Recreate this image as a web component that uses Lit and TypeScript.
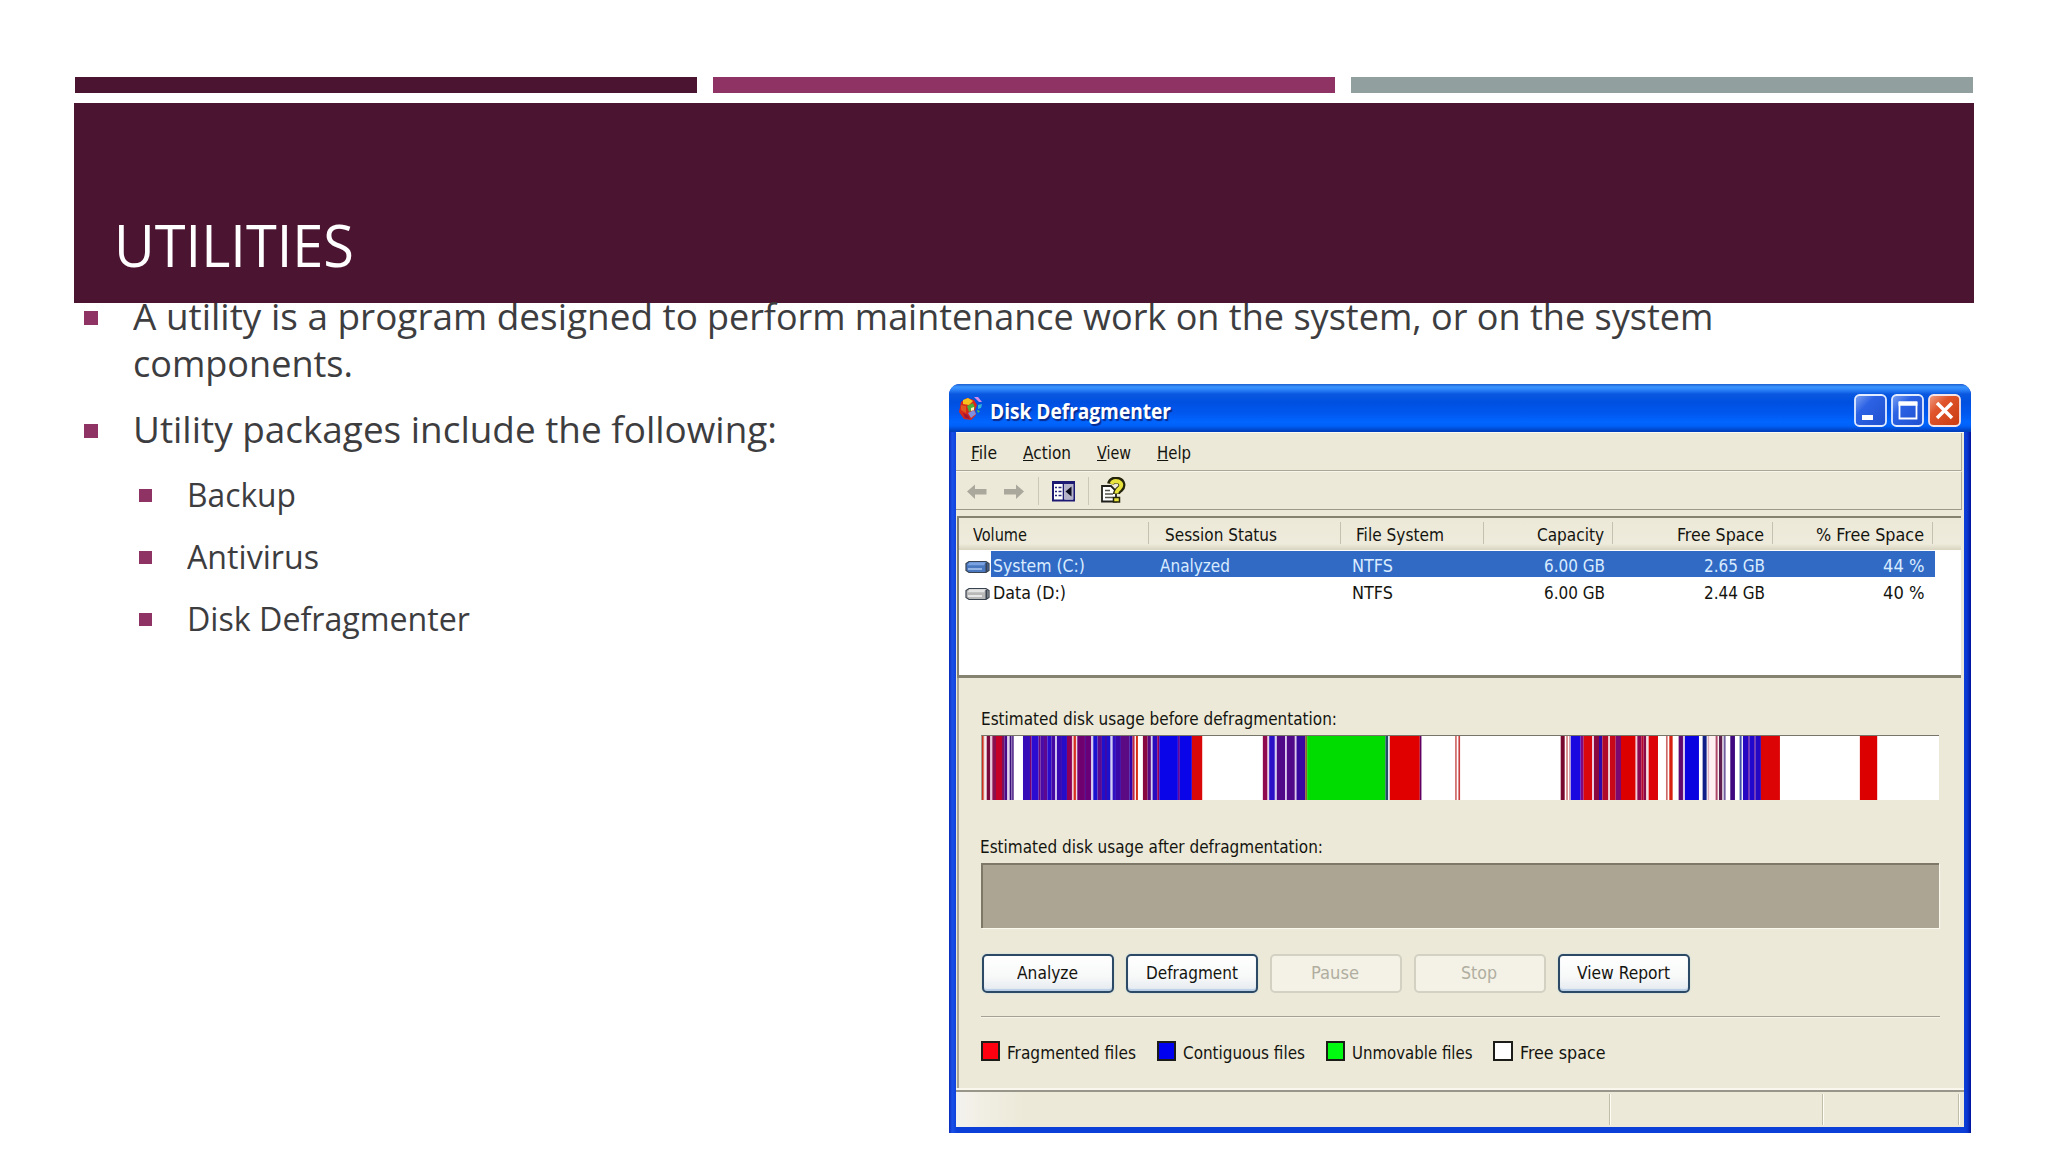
import { LitElement, html, css, svg } from "lit";
import { customElement, property } from "lit/decorators.js";

/** One line of text set to an exact width, whatever the font's own metrics. */
@customElement("fit-text")
class FitText extends LitElement {
  static styles = css`
    :host { display: block; flex: none; }
    .box { display: block; white-space: nowrap; }
    .ink { display: inline-block; transform-origin: 0 50%; white-space: pre; }
  `;
  @property({ type: Number }) w = 100;
  @property() text = "";
  @property() key = "";

  updated() {
    const ink = this.renderRoot.querySelector<HTMLElement>(".ink")!;
    ink.style.transform = "none";
    const natural = ink.getBoundingClientRect().width;
    if (natural > 0) ink.style.transform = `scaleX(${this.w / natural})`;
  }

  render() {
    const i = this.key ? this.text.indexOf(this.key) : -1;
    const body = i < 0 ? this.text : html`${this.text.slice(0, i)}<u>${this.key}</u>${this.text.slice(i + 1)}`;
    return html`<span class="box" style="width:${this.w}px"><span class="ink">${body}</span></span>`;
  }
}

type Stripe = [number, number, string];

// Each group is measured in thirds of a pixel from its own origin.
const GROUPS: { origin: number; stripes: Stripe[] }[] = [
  {
    origin: 970,
    stripes: [
      [36, 41, "#c8321e"], [43, 46, "#eec8c8"], [50, 61, "#7a0a3c"], [61, 67, "#e8c8dc"], [67, 78, "#8a1050"],
      [78, 96, "#c40028"], [96, 103, "#7a1060"], [103, 112, "#4b0a8a"], [112, 119, "#e0d0ee"], [119, 131, "#3c107c"],
      [124, 127, "#b8a0d0"],
      [159, 180, "#360cb8"], [180, 185, "#7a0070"], [185, 206, "#2b0cd0"], [206, 212, "#6a0880"],
      [212, 222, "#4a0aa8"], [222, 232, "#5c0890"], [232, 244, "#2a0ccc"], [244, 256, "#4408a4"],
      [256, 261, "#d0c4f0"], [261, 276, "#3808b0"], [276, 291, "#260cc8"], [291, 306, "#8c0058"],
      [306, 311, "#f0d0d8"], [311, 318, "#d83020"], [318, 322, "#f0d8e0"], [322, 345, "#700070"],
      [345, 348, "#4a0890"], [348, 364, "#6a0078"], [364, 370, "#d8c8f0"], [370, 383, "#1a10d0"],
      [383, 396, "#5a0a90"], [396, 422, "#1f10cc"], [406, 410, "#4808a0"], [422, 428, "#d0ccf4"],
      [428, 438, "#3010c0"], [438, 453, "#3808a8"], [453, 478, "#5c0a84"], [478, 488, "#3408a8"],
      [488, 494, "#c02848"], [498, 504, "#d82c14"], [519, 533, "#8a0840"], [533, 543, "#5a0a80"],
      [543, 548, "#d8d0f0"], [548, 562, "#2a0cc0"], [562, 568, "#900060"], [568, 624, "#0a04e8"],
      [624, 630, "#6008a0"], [630, 666, "#0a04e8"], [666, 697, "#d80808"], [879, 893, "#900a50"],
      [893, 898, "#e8d0ec"], [898, 915, "#2a10c8"], [915, 921, "#d4ccf0"], [921, 946, "#500888"],
      [946, 951, "#dcc8ec"], [951, 975, "#500888"], [975, 980, "#dcc8ec"], [980, 1006, "#3808a0"],
      [1006, 1012, "#8c6430"],
    ],
  },
  {
    origin: 1250,
    stripes: [
      [172, 407, "#00dc00"], [407, 415, "#204c68"], [415, 420, "#d8e8f0"], [420, 510, "#e00000"],
      [510, 515, "#600060"], [616, 621, "#d06868"], [626, 631, "#c84040"],
    ],
  },
  {
    origin: 1540,
    stripes: [
      [63, 75, "#780830"], [80, 84, "#c86060"], [88, 92, "#d8a0a8"], [93, 123, "#1a08e0"], [123, 132, "#800880"],
      [132, 157, "#d8080c"], [157, 163, "#eccce0"], [163, 178, "#8a0840"], [178, 188, "#3008a8"],
      [188, 206, "#b00828"], [206, 211, "#f0ccd4"], [211, 228, "#c80818"], [228, 244, "#7a0870"],
      [244, 288, "#dc0000"], [288, 293, "#f0ccd8"], [293, 305, "#8c0850"], [305, 312, "#b80830"],
      [312, 320, "#8c0848"], [320, 327, "#f4dce0"], [327, 355, "#dc0408"], [379, 384, "#cc6868"],
      [389, 399, "#d82010"], [417, 430, "#600870"], [430, 436, "#d8c8ec"], [436, 478, "#0c04e0"],
      [489, 501, "#102088"], [504, 509, "#dcb0bc"], [510, 528, "#fff0f2"], [528, 534, "#b04868"],
      [538, 548, "#602050"], [552, 558, "#7060a0"], [572, 586, "#400880"], [600, 606, "#4050a8"],
      [610, 626, "#2408c4"], [626, 630, "#5c08a0"], [630, 644, "#2008cc"], [644, 648, "#5808a0"],
      [648, 664, "#2408c4"], [664, 721, "#dc0404"], [961, 1013, "#dc0000"],
    ],
  },
];

const drive = (face: string, lid: string, light: string) => html`
  <svg class="drive" width="25" height="14" viewBox="0 0 25 14">
    <path d="M4 1.5h17l3 2v7l-3 2H4l-3-2v-7z" fill=${face} stroke="#39424f" stroke-width="1.2" />
    <path d="M4.5 2.2h16l-1.5 3H2.5z" fill=${lid} />
    <path d="M3 9h14" stroke=${light} stroke-width="1.6" />
    <path d="M21.5 3v9" stroke="#39424f" stroke-width="2" />
  </svg>`;

@customElement("defrag-window")
class DefragWindow extends LitElement {
  static styles = css`
    * { box-sizing: border-box; }
    :host {
      display: flex; flex-direction: column; width: 1022px; height: 749px;
      font: 17.5px/20px "DejaVu Sans Condensed", "DejaVu Sans", sans-serif; color: #14140f;
      background: linear-gradient(90deg, #0a2ab8 0, #1a50e8 3px, #0c3fd8 8px, #0c3fd8 1015px, #0a38d0 1018px, #00149c 1022px);
      border-radius: 11px 11px 0 0; overflow: hidden;
    }
    .title {
      height: 48px; flex: none; display: flex; align-items: flex-start; padding: 10px 10px 0 8px;
      background: linear-gradient(180deg, #1c5fd0 0, #3b96ff 3px, #2a80f8 6px, #0a58e0 10px, #0050e0 18px, #0058f0 30px, #0066ff 38px, #0060f8 42px, #0040c0 47px, #0040b8 48px);
    }
    .appicon { margin: 2px 7px 0 1px; }
    .name { font: bold 21px/24px "Open Sans", sans-serif; color: #fff; text-shadow: 1.5px 1.5px 1px #0a2a8c; margin-top: 5px; }
    .ctl { margin-left: auto; display: flex; gap: 4px; }
    .body { flex: 1; margin: 0 7px 6px 7px; background: #ece9d8; display: flex; flex-direction: column; border-top: 1px solid #fbfaf2; }
    .menu { height: 38px; flex: none; display: flex; padding: 10px 0 0 14.5px; border-bottom: 1px solid #aaa797; margin-right: 2px; border-right: 1px solid #aaa797; }
    .menu fit-text:nth-child(2) { margin-left: 26px; }
    .menu fit-text:nth-child(3) { margin-left: 26px; }
    .menu fit-text:nth-child(4) { margin-left: 26px; }
    .tools { height: 39px; flex: none; display: flex; align-items: flex-start; padding: 5px 0 0 9px; border-top: 1px solid #f8f6ea; border-bottom: 1.5px solid #9c998a; margin-right: 2px; border-right: 1px solid #aaa797; }
    .help { margin-left: 4px; }
    .table { height: 162px; flex: none; margin: 6px 3px 0 1px; border: solid #85826f; border-width: 2.5px 0 3px 2px; background: #fff; }
    .row { display: grid; grid-template-columns: 190px 192px 143px 129px 160px 160px 28px; align-items: start; }
    .cell { display: flex; height: 100%; }
    .cell.r { justify-content: flex-end; padding-right: 8.5px; }
    .head { height: 32px; background: linear-gradient(180deg, #ece9d8 0, #eeebdc 26px, #d8d4c0 32px); }
    .head .cell { height: 22px; margin-top: 4px; padding-top: 3px; border-right: 1px solid #c4c1b0; }
    .head .cell:last-child { border: 0; }
    .line { height: 27px; padding-top: 4.5px; }
    .c0 { padding-left: 13.5px; } .c1 { padding-left: 15.5px; } .c2 { padding-left: 15px; }
    .line .c0 { padding-left: 6px; } .line .c1 { padding-left: 10.5px; } .line .c2 { padding-left: 10.5px; }
    .drive { margin: 4px 2.5px 0 0; flex: none; }
    .sel { margin-top: 1px; color: #d9ecff; background: linear-gradient(#316ac5, #316ac5) 32px 0 / 944px 26px no-repeat; }
    .panel { flex: 1; display: flex; flex-direction: column; align-items: flex-start; margin-left: 1px; border-left: 2px solid #a9a593; padding-left: 21.5px; }
    .before { margin-top: 31px; }
    .usage { display: block; width: 958.5px; height: 65.5px; margin-top: 5.7px; background: #fff; border-top: 1.5px solid #77756a; border-left: 1px solid #a09d90; }
    .usage svg { display: block; width: 100%; height: 100%; }
    .after { margin: 36.7px 0 0 -1px; }
    .empty { width: 958px; height: 65.5px; margin-top: 6px; background: #aca593; border: solid #7d7868; border-width: 2px 0 0 2px; box-shadow: 1px 1px 0 #fbf9ee; }
    .buttons { display: flex; gap: 12px; margin: 25.5px 0 0 1px; }
    .btn { width: 132px; height: 39px; border-radius: 5px; border: 2px solid #2c4a66; display: flex; justify-content: center; padding-top: 7px;
      background: linear-gradient(180deg, #fff 0, #f7f8f8 60%, #e4eaf0 100%); box-shadow: inset 0 -2px 1px #b9cfe6, 0 0 2px #b8d4e0; }
    .btn.off { border-color: #d3d1c2; background: #f4f2e6; color: #b0aea0; box-shadow: none; padding-right: 2px; }
    .rule { width: 959px; height: 2px; margin-top: 23px; border-top: 1px solid #a5a293; border-bottom: 1px solid #f6f4e8; }
    .legend { display: flex; align-items: flex-start; margin-top: 23.5px; }
    .sw { width: 19.5px; height: 19.5px; border: 2px solid #1c1c18; margin-right: 7px; flex: none; }
    .legend fit-text { margin: 2px 20.5px 0 0; }
    .red { background: #ff0010; } .blue { background: #0000f0; } .green { background: #00fa10; } .white { background: #fff; }
    .status { height: 37px; flex: none; display: flex; border-top: 2px solid #98958a; padding-top: 2px; box-shadow: 0 -2px 0 #faf8ee;
      background: linear-gradient(90deg, #f4f2ee 0, #f0eee2 30px, #ece9d8 70px); }
    .status i { border-right: 1px solid #c0bda8; box-shadow: 1px 0 0 #fffdf4; height: 31px; }
    .s1 { width: 654px; } .s2 { width: 213px; } .s3 { width: 136px; }
  `;

  private stripes() {
    return GROUPS.flatMap(({ origin, stripes }) =>
      stripes.map(([a, b, color]) => svg`<rect x=${origin - 982 + a / 3} y="0" width=${(b - a) / 3} height="65" fill=${color} />`),
    );
  }

  render() {
    return html`
      <div class="title">
        <svg class="appicon" width="25" height="26" viewBox="0 0 25 26">
          <path d="M3 6l6-4 7 2 3 5-2 5 1 5-5 5-7-1-5-7z" fill="#d8281c" />
          <path d="M5 4l5-2 5 3-4 4-6-1z" fill="#f7c21c" />
          <path d="M3 9l5 1v7l-5-3z" fill="#e05a20" />
          <path d="M9 10l6-3 2 5-6 4z" fill="#4fae38" />
          <path d="M10 17l6-3 2 4-5 4z" fill="#7e8fe0" />
          <path d="M5 17l5 2 2 4-5-1z" fill="#a01838" />
          <path d="M13 12l3-1v3l-3 1z" fill="#fff3b0" />
          <path d="M16 1l4 0 4 5-3 0z" fill="#d88ae8" />
          <path d="M20 9l4-1-1 4-3 1z" fill="#35b8d8" />
          <path d="M19 14l3 1-2 2z" fill="#58c850" />
        </svg>
        <fit-text class="name" .w=${181} text="Disk Defragmenter"></fit-text>
        <div class="ctl">
          <svg width="33" height="33" viewBox="0 0 33 33">
            <defs>
              <linearGradient id="b" x1="0" y1="0" x2="1" y2="1"><stop offset="0" stop-color="#7fa4f4" /><stop offset=".35" stop-color="#2c62e4" /><stop offset="1" stop-color="#1e50d0" /></linearGradient>
            </defs>
            <rect x="1" y="1" width="31" height="31" rx="4.5" fill="url(#b)" stroke="#e4ecff" stroke-width="1.8" />
            <rect x="8" y="21" width="11" height="5" fill="#fff" />
          </svg>
          <svg width="33" height="33" viewBox="0 0 33 33">
            <defs>
              <linearGradient id="b2" x1="0" y1="0" x2="1" y2="1"><stop offset="0" stop-color="#7fa4f4" /><stop offset=".35" stop-color="#2c62e4" /><stop offset="1" stop-color="#1e50d0" /></linearGradient>
            </defs>
            <rect x="1" y="1" width="31" height="31" rx="4.5" fill="url(#b2)" stroke="#e4ecff" stroke-width="1.8" />
            <path d="M8.5 9h17v15.500h-17z" fill="none" stroke="#fff" stroke-width="1.8" />
            <path d="M7.600 9.500h18.800" stroke="#fff" stroke-width="4.500" />
          </svg>
          <svg width="33" height="33" viewBox="0 0 33 33">
            <defs>
              <linearGradient id="r" x1="0" y1="0" x2="1" y2="1"><stop offset="0" stop-color="#f0a088" /><stop offset=".35" stop-color="#e0552c" /><stop offset="1" stop-color="#c83a10" /></linearGradient>
            </defs>
            <rect x="1" y="1" width="31" height="31" rx="4.5" fill="url(#r)" stroke="#f4e4e8" stroke-width="1.8" />
            <path d="M9 9l15 15M24 9L9 24" stroke="#fff" stroke-width="3.4" />
          </svg>
        </div>
      </div>
      <div class="body">
        <div class="menu">
          <fit-text .w=${26} text="File" key="F"></fit-text>
          <fit-text .w=${48} text="Action" key="A"></fit-text>
          <fit-text .w=${34} text="View" key="V"></fit-text>
          <fit-text .w=${34} text="Help" key="H"></fit-text>
        </div>
        <div class="tools">
          <svg width="130" height="28" viewBox="965 477 130 28">
            <path d="M967 491.500l8-7v4.500h11.500v5.500h-11.500v4.500z" fill="#aaa89c" />
            <path d="M1024 491.500l-8-7v4.500h-12v5.500h12v4.500z" fill="#aaa89c" />
            <path d="M1038.500 475v30M1088.500 475v30" stroke="#cbc8b8" />
            <rect x="1053" y="482" width="21" height="18.500" fill="#fff" stroke="#1c1a72" stroke-width="2" />
            <path d="M1052 482.500h23" stroke="#1c1a72" stroke-width="3" />
            <path d="M1063.500 484v16" stroke="#1c1a72" stroke-width="1.600" />
            <rect x="1064.500" y="484" width="9" height="15.500" fill="#b4b2c8" />
            <path d="M1071.500 486.500v10l-6-5z" fill="#0c0c20" />
            <path d="M1055 487.500h2M1055 491.500h2M1055 495.500h2M1058.500 487.500h3M1058.500 491.500h3M1058.500 495.500h3" stroke="#2a287c" stroke-width="1.600" />
          </svg>
          <svg class="help" width="28" height="28" viewBox="1099 477 28 28">
            <path d="M1102 486h9l5 5v10.500h-14z" fill="#fff" stroke="#20201c" stroke-width="1.800" />
            <path d="M1105 490.500h5M1105 494h8M1105 497.500h8" stroke="#55554c" stroke-width="1.300" />
            <path d="M1110.500 484c1-4 5-4.500 8-3.500 4 1.500 4.500 6 1.500 8.500-2.500 2-3.500 2.500-3.500 5" fill="none" stroke="#25250c" stroke-width="7" />
            <path d="M1111.500 484c1-3 4-3.500 7-2.500 3.500 1.500 3.500 5 1 7-2.500 2-3 2.500-3 5" fill="none" stroke="#e8e23c" stroke-width="4" />
            <rect x="1113.500" y="497.500" width="6" height="4.500" fill="#e8e23c" stroke="#25250c" stroke-width="1.500" />
          </svg>
        </div>
        <div class="table">
          <div class="row head">
            <div class="cell c0"><fit-text .w=${54} text="Volume"></fit-text></div>
            <div class="cell c1"><fit-text .w=${112} text="Session Status"></fit-text></div>
            <div class="cell c2"><fit-text .w=${88} text="File System"></fit-text></div>
            <div class="cell r"><fit-text .w=${67} text="Capacity"></fit-text></div>
            <div class="cell r"><fit-text .w=${87} text="Free Space"></fit-text></div>
            <div class="cell r"><fit-text .w=${108} text="% Free Space"></fit-text></div>
            <div class="cell"></div>
          </div>
          <div class="row line sel">
            <div class="cell c0">${drive("#4a78c0", "#7aa2e0", "#a8c4ee")}<fit-text .w=${92} text="System (C:)"></fit-text></div>
            <div class="cell c1"><fit-text .w=${70} text="Analyzed"></fit-text></div>
            <div class="cell c2"><fit-text .w=${41} text="NTFS"></fit-text></div>
            <div class="cell r"><fit-text .w=${61} text="6.00 GB"></fit-text></div>
            <div class="cell r"><fit-text .w=${61} text="2.65 GB"></fit-text></div>
            <div class="cell r"><fit-text .w=${41.5} text="44 %"></fit-text></div>
          </div>
          <div class="row line">
            <div class="cell c0">${drive("#b8b8b8", "#e4e4e4", "#f4f4f4")}<fit-text .w=${73} text="Data (D:)"></fit-text></div>
            <div class="cell c1"></div>
            <div class="cell c2"><fit-text .w=${41} text="NTFS"></fit-text></div>
            <div class="cell r"><fit-text .w=${61} text="6.00 GB"></fit-text></div>
            <div class="cell r"><fit-text .w=${61} text="2.44 GB"></fit-text></div>
            <div class="cell r"><fit-text .w=${41.5} text="40 %"></fit-text></div>
          </div>
        </div>
        <div class="panel">
          <fit-text class="before" .w=${356} text="Estimated disk usage before defragmentation:"></fit-text>
          <div class="usage"><svg viewBox="0 0 958 65" preserveAspectRatio="none">${this.stripes()}</svg></div>
          <fit-text class="after" .w=${343} text="Estimated disk usage after defragmentation:"></fit-text>
          <div class="empty"></div>
          <div class="buttons">
            <div class="btn"><fit-text .w=${61} text="Analyze"></fit-text></div>
            <div class="btn"><fit-text .w=${92} text="Defragment"></fit-text></div>
            <div class="btn off"><fit-text .w=${48} text="Pause"></fit-text></div>
            <div class="btn off"><fit-text .w=${36} text="Stop"></fit-text></div>
            <div class="btn"><fit-text .w=${93} text="View Report"></fit-text></div>
          </div>
          <div class="rule"></div>
          <div class="legend">
            <span class="sw red"></span><fit-text .w=${129} text="Fragmented files"></fit-text>
            <span class="sw blue"></span><fit-text .w=${122} text="Contiguous files"></fit-text>
            <span class="sw green"></span><fit-text .w=${120.5} text="Unmovable files"></fit-text>
            <span class="sw white"></span><fit-text .w=${85.5} text="Free space"></fit-text>
          </div>
        </div>
        <div class="status"><i class="s1"></i><i class="s2"></i><i class="s3"></i></div>
      </div>
    `;
  }
}

@customElement("app-root")
class AppRoot extends LitElement {
  static styles = css`
    * { box-sizing: border-box; }
    :host { display: block; position: relative; width: 2048px; height: 1152px; overflow: hidden; background: #fff; font-family: "Open Sans", sans-serif; }
    .bars { display: grid; grid-template-columns: repeat(3, 622.5px); gap: 15.5px; padding: 77px 0 0 74.5px; }
    .bars i { height: 15.5px; background: #4b1430; }
    .bars i:nth-child(2) { background: #8f3264; }
    .bars i:nth-child(3) { background: #929f9f; }
    .banner { margin: 10.5px 74px 0; height: 200px; background: #4b1430; color: #fff; padding: 109px 0 0 39.5px; font-size: 59px; line-height: 64px; }
    .list { position: relative; margin-top: -11.5px; font-size: 37.3px; line-height: 47px; color: #3d3d3f; }
    .item { display: flex; padding-left: 84px; margin-bottom: 19.5px; }
    .item::before { content: ""; flex: none; width: 14px; height: 14px; margin: 19px 34.5px 0 0; background: #8f3264; }
    .runs { display: flex; }
    .sub { font-size: 32.3px; line-height: 40px; padding-left: 138.5px; margin-bottom: 22px; }
    .lead { margin-bottom: 21.5px; }
    .sub::before { width: 13px; height: 13px; margin: 15px 35.5px 0 0; }
    .window { position: absolute; left: 949px; top: 384px; }
  `;

  render() {
    return html`
      <div class="bars"><i></i><i></i><i></i></div>
      <div class="banner"><fit-text .w=${240} text="UTILITIES"></fit-text></div>
      <div class="list">
        <div class="item">
          <div>
            <div class="runs">
              <fit-text .w=${574.5} text="A utility is a program designed to "></fit-text>
              <fit-text .w=${376} text="perform maintenance "></fit-text>
              <fit-text .w=${630.5} text="work on the system, or on the system"></fit-text>
            </div>
            <fit-text .w=${220} text="components."></fit-text>
          </div>
        </div>
        <div class="item lead"><fit-text .w=${644} text="Utility packages include the following:"></fit-text></div>
        <div class="item sub"><fit-text .w=${109} text="Backup"></fit-text></div>
        <div class="item sub"><fit-text .w=${132} text="Antivirus"></fit-text></div>
        <div class="item sub"><fit-text .w=${283} text="Disk Defragmenter"></fit-text></div>
      </div>
      <defrag-window class="window"></defrag-window>
    `;
  }
}
